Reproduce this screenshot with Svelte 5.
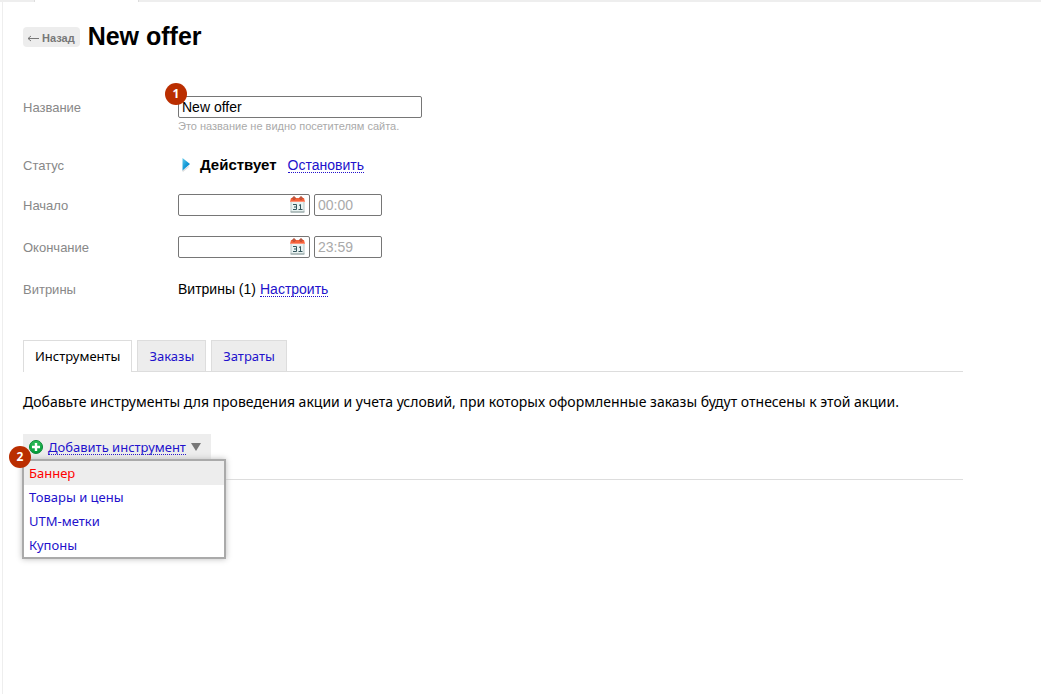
<script>
  let name = $state('New offer');
  const tabs = ['Инструменты', 'Заказы', 'Затраты'];
  let activeTab = $state('Инструменты');
  const tools = ['Баннер', 'Товары и цены', 'UTM-метки', 'Купоны'];
  const dates = [
    { id: 'start', label: 'Начало', time: '00:00' },
    { id: 'end', label: 'Окончание', time: '23:59' }
  ];
</script>

<div class="topbar"><span class="toptab"></span></div>
<main>
  <header>
    <button class="back"><svg width="12" height="7" viewBox="0 0 12 7" aria-hidden="true"><path d="M1 3.5h11M4 1L1 3.5L4 6" fill="none" stroke="#777" /></svg>Назад</button>
    <h1>New offer</h1>
  </header>

  <div class="form">
    <div class="row name">
      <label for="name">Название</label>
      <div class="field">
        <input id="name" type="text" bind:value={name} />
        <span class="badge">1</span>
        <small>Это название не видно посетителям сайта.</small>
      </div>
    </div>
    <div class="row status">
      <span class="label">Статус</span>
      <div class="value">
        <svg class="play" width="8" height="14" viewBox="0 0 8 14" aria-hidden="true">
          <defs>
            <linearGradient id="blue" x2="1" y2="1"><stop stop-color="#64cbea" /><stop offset=".5" stop-color="#159bd8" /><stop offset="1" stop-color="#087bbd" /></linearGradient>
          </defs>
          <path d="M0 12.5L7 8v1L1 14z" fill="#ddd" />
          <path d="M.5 0L8 6L.5 12.5z" fill="url(#blue)" />
        </svg>
        <strong>Действует</strong>
        <a href="#stop">Остановить</a>
      </div>
    </div>
    {#each dates as date}
      <div class="row date">
        <label for={date.id}>{date.label}</label>
        <div class="value">
          <span class="datebox">
            <input id={date.id} type="text" />
            <button class="calendar" aria-label="Выбрать дату">
              <svg width="15" height="17" viewBox="0 0 15 17">
                <path d="M1 5h13v11H1z" fill="#e9f3f2" stroke="#b9c7c7" />
                <path d="M.5 15.5h14v1H.5z" fill="#8f9e9e" />
                <path d="M1 2h13l1 4H0z" fill="#f4623a" />
                <path d="M0 5h15v1H0z" fill="#ff9278" />
                <path d="M3 3V1h2v2zM10 3V1h2v2z" fill="#ffb29d" stroke="#a83b22" />
                <path d="M3 8.5h3.5v5H3M4 11h2.5M9 9.5l1.5-1v5M8.5 13.5h4" fill="none" stroke="#35575e" />
              </svg>
            </button>
          </span>
          <input class="time" type="text" aria-label="{date.label}: время" value={date.time} />
        </div>
      </div>
    {/each}
    <div class="row">
      <span class="label">Витрины</span>
      <div class="value shops">Витрины (1) <a href="#setup">Настроить</a></div>
    </div>
  </div>

  <nav>
    {#each tabs as tab}
      <button class="tab" class:active={tab === activeTab} onclick={() => (activeTab = tab)}>{tab}</button>
    {/each}
  </nav>

  <p>Добавьте инструменты для проведения акции и учета условий, при которых оформленные заказы будут отнесены к этой акции.</p>

  <section>
    <div class="dropdown">
      <button class="add">
        <svg width="14" height="14" viewBox="0 0 14 14" aria-hidden="true">
          <defs>
            <linearGradient id="green" x2="0" y2="1"><stop stop-color="#2fbe5a" /><stop offset="1" stop-color="#009a36" /></linearGradient>
          </defs>
          <circle cx="7" cy="7" r="6.5" fill="url(#green)" stroke="#078735" />
          <path d="M7 3v8M3 7h8" stroke="#fff" stroke-width="2.4" />
        </svg>
        <span>Добавить инструмент</span>
        <svg width="10" height="8" viewBox="0 0 10 8" aria-hidden="true"><path d="M0 0h10L5 8z" fill="#777" /></svg>
      </button>
      <span class="badge two">2</span>
      <ul>
        {#each tools as tool, i}
          <li><a href="#tool-{i}" class:current={i === 0}>{tool}</a></li>
        {/each}
      </ul>
    </div>
  </section>
</main>

<style>
  :global(body) { background: #fff; color: #000; }
  .topbar { height: 2px; background: #eee; padding-left: 34px; }
  .toptab { display: block; box-sizing: border-box; width: 105px; height: 2px; background: #fff; border: solid #ddd; border-width: 0 1px; }
  main {
    box-sizing: border-box;
    min-height: calc(100vh - 2px);
    margin-left: 2px;
    padding: 18px 78px 40px 20px;
    border-left: 1px solid #eee;
    font: 14px/20px "Liberation Sans", Arial, sans-serif;
  }
  header { display: flex; align-items: center; gap: 8px; height: 32px; }
  button { border: 0; padding: 0; background: none; font: inherit; cursor: pointer; }
  .back {
    display: flex; align-items: center; gap: 3px; height: 20px; margin-top: 2px; padding: 2px 5px 0 4px;
    border-radius: 4px; background: #ededed; color: #777; font: bold 11px/18px "Liberation Sans", Arial, sans-serif;
  }
  h1 { margin: 0; font: bold 25px/32px "Liberation Sans", Arial, sans-serif; }
  .form { margin-top: 44px; }
  .row { display: grid; grid-template-columns: 155px 1fr; align-items: center; min-height: 22px; margin-bottom: 20px; }
  .row.status { margin-bottom: 18px; }
  .row.name { align-items: start; }
  .label, label { padding-top: 2px; color: #888; font-size: 13px; line-height: 20px; }
  .field { position: relative; }
  .value { display: flex; align-items: center; gap: 4px; }
  .status .value { padding-left: 4px; gap: 10px; font-size: 15px; }
  .status a { margin-left: 1px; font-size: 14px; }
  input {
    box-sizing: border-box; display: block; height: 22px; padding: 1px 3px; border: 1px solid #767676; border-radius: 2px;
    background: #fff; color: #000; font: 14px/18px "Liberation Sans", Arial, sans-serif;
  }
  #name { width: 244px; }
  small { display: block; color: #aaa; font-size: 11px; line-height: 16px; }
  .datebox { position: relative; }
  .datebox input { width: 132px; padding-right: 22px; }
  .calendar { position: absolute; top: 2px; right: 5px; height: 17px; line-height: 0; }
  input.time { width: 68px; color: #aaa; }
  a { color: #21c; text-decoration: none; }
  .value a, .add span { line-height: 14px; border-bottom: 1px dotted #21c; }
  .badge {
    position: absolute; top: -13px; left: -13px; width: 22px; height: 22px; border-radius: 50%;
    background: #ba2e00; color: #fff; text-align: center; font: bold 12px/22px "Open Sans", sans-serif;
  }
  nav { display: flex; gap: 5px; margin-top: 40px; border-bottom: 1px solid #ddd; }
  .tab {
    box-sizing: border-box; height: 31px; padding: 0 11px; border: 1px solid #ddd; border-bottom: 0; background: #ededed; color: #21c;
    font: 13px/30px "Noto Sans", sans-serif;
  }
  .tab.active { height: 32px; margin-bottom: -1px; padding-bottom: 1px; background: #fff; color: #000; }
  p { margin: 20px 0; font: 14px/20px "Noto Sans", sans-serif; }
  section { height: 45px; margin-top: 22px; border-bottom: 1px solid #ddd; }
  .dropdown { position: relative; width: max-content; }
  .add { display: flex; align-items: center; gap: 5px; height: 26px; padding: 0 10px 0 6px; background: #ededed; color: #21c; font: 13px/26px "Noto Sans", sans-serif; }
  .badge.two { z-index: 2; top: 12px; left: -14px; }
  ul {
    position: absolute; top: 25px; left: -1px; box-sizing: border-box; width: 204px; margin: 0; padding: 0;
    border: 2px solid #aaa; background: #fff; list-style: none; box-shadow: 0 0 6px #bbb;
  }
  li a { display: block; padding: 0 5px; font: 13px/24px "Noto Sans", sans-serif; }
  li a.current { background: #ededed; color: #f00; }
</style>
